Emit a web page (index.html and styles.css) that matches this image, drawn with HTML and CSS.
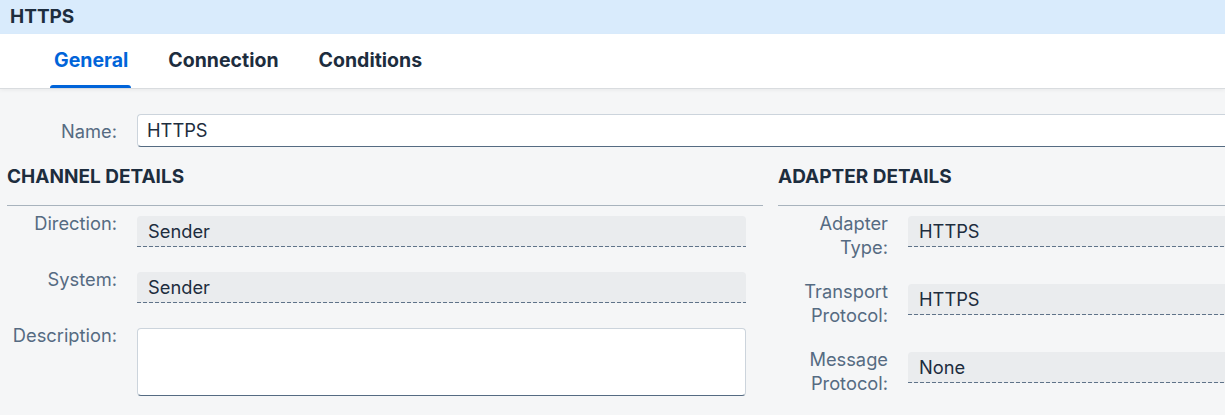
FILE: index.html
```html
<!DOCTYPE html>
<html lang="en">
<head>
<meta charset="utf-8">
<title>HTTPS</title>
<link rel="stylesheet" href="styles.css">
</head>
<body>
<div class="titlebar">HTTPS</div>
<nav class="tabs">
  <div class="tab active">General</div>
  <div class="tab">Connection</div>
  <div class="tab">Conditions</div>
</nav>
<main class="content">
  <div class="name-row">
    <label class="label">Name:</label>
    <div class="input">HTTPS</div>
  </div>
  <div class="columns">
    <section class="column">
      <h2 class="heading">CHANNEL DETAILS</h2>
      <div class="rows">
        <div class="row">
          <div class="label">Direction:</div>
          <div class="field">Sender</div>
        </div>
        <div class="row">
          <div class="label">System:</div>
          <div class="field">Sender</div>
        </div>
        <div class="row">
          <div class="label">Description:</div>
          <div class="textarea"></div>
        </div>
      </div>
    </section>
    <section class="column column-right">
      <h2 class="heading">ADAPTER DETAILS</h2>
      <div class="rows">
        <div class="row">
          <div class="label">Adapter<br>Type:</div>
          <div class="field">HTTPS</div>
        </div>
        <div class="row">
          <div class="label">Transport<br>Protocol:</div>
          <div class="field">HTTPS</div>
        </div>
        <div class="row">
          <div class="label">Message<br>Protocol:</div>
          <div class="field">None</div>
        </div>
      </div>
    </section>
  </div>
</main>
</body>
</html>
```
FILE: styles.css
```css
* { box-sizing: border-box; }
html, body { margin: 0; padding: 0; }
body {
  background: #f5f6f7;
  font-family: Inter, "Noto Sans", "Liberation Sans", sans-serif;
  color: #1d2d3e;
  overflow: hidden;
  width: 1225px;
  height: 415px;
}
.titlebar {
  height: 34px;
  line-height: 34px;
  background: #d9ebfc;
  padding-left: 10px;
  font-weight: 700;
  font-size: 19px;
  color: #1d2d3e;
}
.tabs {
  height: 54px;
  background: #fff;
  display: flex;
  padding-left: 50px;
  gap: 33px;
  box-shadow: 0 1px 0 #d9dcdf, 0 2px 4px rgba(0,0,0,0.06);
  position: relative;
}
.tab {
  padding: 0 3px 2px 4px;
  display: flex;
  align-items: center;
  font-weight: 700;
  font-size: 19.5px;
  color: #1d2d3e;
  position: relative;
}
.tab.active {
  color: #0064d9;
}
.tab.active::after {
  content: "";
  position: absolute;
  left: 0;
  right: 0;
  bottom: 0;
  height: 3px;
  background: #0064d9;
  border-radius: 3px 3px 0 0;
}
.content {
  width: 1240px;
  padding: 26px 0 0 7px;
}
.label {
  width: 110px;
  text-align: right;
  color: #556b82;
  font-size: 18.3px;
  line-height: 24px;
  flex: none;
}
.name-row {
  display: flex;
  align-items: center;
  gap: 20px;
}
.input {
  flex: 1;
  height: 33px;
  background: #fff;
  border: 1px solid #ccd4dc;
  border-right: 0;
  border-bottom-color: #556b82;
  border-radius: 4px 0 0 4px;
  padding-left: 9px;
  font-size: 18.3px;
  line-height: 30px;
  color: #1d2d3e;
}
.columns {
  display: flex;
  gap: 15px;
}
.column {
  width: 756px;
  flex: none;
}
.column-right {
  flex: 1;
  width: auto;
}
.column-right .row {
  padding-right: 0;
}
.heading {
  margin: 18px 0 0;
  font-size: 19px;
  line-height: 24px;
  font-weight: 700;
  padding-bottom: 16px;
  border-bottom: 1px solid #a8b3bd;
  color: #1d2d3e;
}
.rows {
  padding-top: 5px;
  display: flex;
  flex-direction: column;
  gap: 20px;
}
.row {
  display: flex;
  align-items: flex-start;
  gap: 20px;
  padding-right: 17px;
}
.field {
  flex: 1;
  margin-top: 5px;
  height: 31px;
  background-color: #eaecee;
  background-image: linear-gradient(to right, #5f7389 4px, transparent 4px);
  background-size: 6px 1px;
  background-repeat: repeat-x;
  background-position: left bottom;
  border-radius: 4px 4px 0 0;
  padding-left: 11px;
  font-size: 18.3px;
  line-height: 30px;
  color: #1d2d3e;
}
.textarea {
  flex: 1;
  margin-top: 5px;
  height: 68px;
  background: #fff;
  border: 1px solid #ccd4dc;
  border-bottom-color: #556b82;
  border-radius: 4px;
}
```
